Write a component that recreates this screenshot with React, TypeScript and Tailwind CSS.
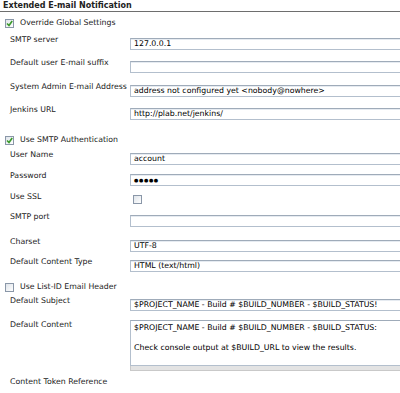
import React from "react";

const font = { fontFamily: '"DejaVu Sans", Verdana, sans-serif' };

function Check({ checked }: { checked?: boolean }) {
  return (
    <div className="w-[9px] h-[9px] border border-[#8a97a8] bg-gradient-to-br from-[#dfe4ea] to-white flex items-center justify-center shrink-0">
      {checked && (
        <svg width="7" height="7" viewBox="0 0 7 7">
          <path d="M1 3.5 L3 5.5 L6.2 1" stroke="#3a9a2a" strokeWidth="1.6" fill="none" />
        </svg>
      )}
    </div>
  );
}

function Box({ children, h = 12 }: { children?: React.ReactNode; h?: number }) {
  return (
    <div
      className="w-[300px] border border-[#b3bfcd] border-t-[#9fabb9] bg-white pl-[3px] text-[7.8px] leading-[10px] text-black flex items-center whitespace-nowrap overflow-hidden shadow-[inset_0_1px_0_#e6ebf1]"
      style={{ height: h }}
    >
      {children}
    </div>
  );
}

function Row({ label, h, children }: { label: string; h: number; children?: React.ReactNode }) {
  return (
    <div className="flex items-start" style={{ height: h }}>
      <div className="w-[130px] pl-[10px] text-[7.8px] leading-[10px] text-[#222] shrink-0 whitespace-nowrap">{label}</div>
      <div className="mt-[3px]">{children}</div>
    </div>
  );
}

function CheckRow({ label, checked, h, pt }: { label: string; checked?: boolean; h: number; pt: number }) {
  return (
    <div className="flex items-start pl-[5px]" style={{ height: h, paddingTop: pt }}>
      <div className="flex items-center gap-[6px]">
        <Check checked={checked} />
        <span className="text-[7.8px] leading-[10px] text-[#222] whitespace-nowrap">{label}</span>
      </div>
    </div>
  );
}

export default function App() {
  return (
    <div className="w-[400px] h-[393px] bg-white overflow-hidden" style={font}>
      <div className="h-[12px] border-b border-[#6e6e6e] pl-[3px]">
        <div className="text-[8px] leading-[11px] font-bold text-[#222] whitespace-nowrap">Extended E-mail Notification</div>
      </div>
      <CheckRow label="Override Global Settings" checked h={23} pt={6} />
      <Row label="SMTP server" h={23}>
        <Box>127.0.0.1</Box>
      </Row>
      <Row label="Default user E-mail suffix" h={24}>
        <Box />
      </Row>
      <Row label="System Admin E-mail Address" h={23}>
        <Box>address not configured yet &lt;nobody@nowhere&gt;</Box>
      </Row>
      <Row label="Jenkins URL" h={27}>
        <Box>http://plab.net/jenkins/</Box>
      </Row>
      <CheckRow label="Use SMTP Authentication" checked h={18} pt={3} />
      <Row label="User Name" h={21}>
        <Box>account</Box>
      </Row>
      <Row label="Password" h={21}>
        <Box>
          <span className="text-[5px] tracking-[0.6px] font-bold">●●●●●</span>
        </Box>
      </Row>
      <Row label="Use SSL" h={20}>
        <div className="pl-[3px]">
          <Check />
        </div>
      </Row>
      <Row label="SMTP port" h={25}>
        <Box />
      </Row>
      <Row label="Charset" h={20}>
        <Box>UTF-8</Box>
      </Row>
      <Row label="Default Content Type" h={23}>
        <Box>HTML (text/html)</Box>
      </Row>
      <CheckRow label="Use List-ID Email Header" h={16} pt={2} />
      <Row label="Default Subject" h={24}>
        <Box>$PROJECT_NAME - Build # $BUILD_NUMBER - $BUILD_STATUS!</Box>
      </Row>
      <div className="flex items-start h-[57px]">
        <div className="w-[130px] pl-[10px] text-[7.8px] leading-[10px] text-[#222] shrink-0 whitespace-nowrap">Default Content</div>
        <div className="w-[300px] shrink-0">
          <div className="h-[46px] border border-[#b3bfcd] border-t-[#9fabb9] bg-white pl-[3px] pt-[2px] text-[7.8px] leading-[10px] text-black whitespace-nowrap overflow-hidden">
            <div>$PROJECT_NAME - Build # $BUILD_NUMBER - $BUILD_STATUS:</div>
            <div className="h-[10px]" />
            <div>Check console output at $BUILD_URL to view the results.</div>
          </div>
          <div className="h-[5px] bg-[#e3e3e3] border border-t-0 border-[#c9c9c9]" />
        </div>
      </div>
      <div className="pl-[10px] text-[7.8px] leading-[10px] text-[#222] whitespace-nowrap">Content Token Reference</div>
    </div>
  );
}
